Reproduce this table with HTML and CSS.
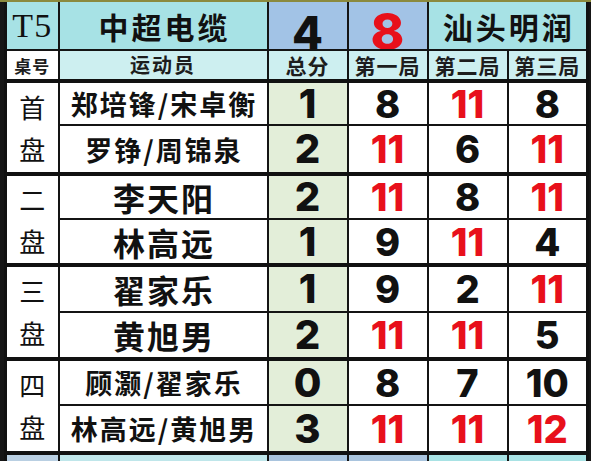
FILE: index.html
```html
<!DOCTYPE html>
<html lang="zh">
<head>
<meta charset="utf-8">
<title>T5 中超电缆 vs 汕头明润</title>
<link rel="stylesheet" href="styles.css">
</head>
<body>
<div class="frame">
<table class="score">
  <colgroup>
    <col class="c-desk"><col class="c-name"><col class="c-total"><col class="c-g"><col class="c-g"><col class="c-g">
  </colgroup>
  <tr class="r-title">
    <td class="t5">T5</td>
    <td class="team">中超电缆</td>
    <td class="big blue"><span class="n4">4</span></td>
    <td class="big blue red"><span class="n8">8</span></td>
    <td class="team" colspan="2">汕头明润</td>
  </tr>
  <tr class="r-head">
    <td class="h desk-h">桌号</td>
    <td class="h h-name">运动员</td>
    <td class="h">总分</td>
    <td class="h">第一局</td>
    <td class="h">第二局</td>
    <td class="h">第三局</td>
  </tr>

  <tr class="r-data r1 gstart">
    <td class="desk" rowspan="2"><div class="desk-v"><span>首</span><span>盘</span></div></td>
    <td class="name">郑培锋/宋卓衡</td>
    <td class="total">1</td>
    <td class="g">8</td><td class="g red">11</td><td class="g">8</td>
  </tr>
  <tr class="r-data r2">
    <td class="name">罗铮/周锦泉</td>
    <td class="total">2</td>
    <td class="g red">11</td><td class="g">6</td><td class="g red">11</td>
  </tr>

  <tr class="r-data r3 gstart">
    <td class="desk" rowspan="2"><div class="desk-v"><span>二</span><span>盘</span></div></td>
    <td class="name single">李天阳</td>
    <td class="total">2</td>
    <td class="g red">11</td><td class="g">8</td><td class="g red">11</td>
  </tr>
  <tr class="r-data r4">
    <td class="name single">林高远</td>
    <td class="total">1</td>
    <td class="g">9</td><td class="g red">11</td><td class="g">4</td>
  </tr>

  <tr class="r-data r5 gstart">
    <td class="desk" rowspan="2"><div class="desk-v"><span>三</span><span>盘</span></div></td>
    <td class="name single">翟家乐</td>
    <td class="total">1</td>
    <td class="g">9</td><td class="g">2</td><td class="g red">11</td>
  </tr>
  <tr class="r-data r6">
    <td class="name single">黄旭男</td>
    <td class="total">2</td>
    <td class="g red">11</td><td class="g red">11</td><td class="g">5</td>
  </tr>

  <tr class="r-data r7 gstart">
    <td class="desk" rowspan="2"><div class="desk-v"><span>四</span><span>盘</span></div></td>
    <td class="name">顾灏/翟家乐</td>
    <td class="total">0</td>
    <td class="g">8</td><td class="g">7</td><td class="g">10</td>
  </tr>
  <tr class="r-data r8">
    <td class="name">林高远/黄旭男</td>
    <td class="total">3</td>
    <td class="g red">11</td><td class="g red">11</td><td class="g red">12</td>
  </tr>

  <tr class="r-next">
    <td class="nx-a"></td><td class="nx-b"></td><td class="nx-c"></td><td class="nx-c"></td><td class="nx-d"></td><td class="nx-d"></td>
  </tr>
</table>
</div>
</body>
</html>
```

FILE: styles.css
```css
html, body {
  margin: 0;
  padding: 0;
  background: #161616;
}

.frame {
  border-top: 2px solid #8b8a3e;
  padding-left: 4px;
  height: 459px;
  overflow: hidden;
}

.score {
  border-collapse: collapse;
  table-layout: fixed;
  width: 585px;
  border-left: 3px solid #111;
  border-right: 3px solid #111;
  font-family: "Noto Sans CJK SC", "Noto Sans", sans-serif;
  color: #111;
}

.c-desk { width: 53px; }
.c-name { width: 209px; }
.c-total { width: 80px; }
.c-g { width: 80px; }

.score td {
  border: 2px solid #141414;
  padding: 0;
  text-align: center;
  vertical-align: middle;
  overflow: hidden;
  background: #fff;
  white-space: nowrap;
  line-height: 1;
}

/* title row */
.r-title td {
  border-top: 0;
  height: 47px;
  background: #a7e2e5;
}
.r-title td.blue { background: #a2c3e6; }
.t5 {
  font-family: "Liberation Serif", "DejaVu Serif", serif;
  font-size: 34px;
  font-weight: 400;
  letter-spacing: 1px;
}
.team {
  font-size: 30px;
  font-weight: 700;
  letter-spacing: 3px;
  padding-left: 3px !important;
}
.big {
  vertical-align: bottom !important;
  font-family: Inter, "Noto Sans", sans-serif;
  font-weight: 800;
}
.n4 {
  display: block;
  font-size: 45px;
  line-height: 44px;
  height: 38px;
}
.n8 {
  display: block;
  font-size: 51px;
  line-height: 46px;
  height: 40px;
}

/* heading row */
.r-head td {
  height: 28px;
  background: #cdeff0;
  font-weight: 700;
  font-size: 21px;
  letter-spacing: 1px;
  color: #1d1d1d;
}
.r-head td.desk-h {
  background: #fff;
  font-size: 17px;
}
.r-head td.h-name {
  font-size: 20px;
  letter-spacing: 2px;
}

/* data rows */
.r-data.r1 td { height: 41px; }
.r-data.r2 td { height: 46px; }
.r-data.r3 td { height: 42px; }
.r-data.r4 td { height: 43px; }
.r-data.r5 td { height: 44px; }
.r-data.r6 td { height: 44px; }
.r-data.r7 td { height: 43px; }
.r-data.r8 td { height: 45px; }
.r-data.gstart td { border-top: 4px solid #111; }

.desk {
  font-size: 26px;
  font-weight: 400;
}
.desk-v {
  display: flex;
  flex-direction: column;
  align-items: center;
  gap: 16px;
  line-height: 26px;
}

.name {
  font-size: 27px;
  font-weight: 700;
  letter-spacing: 2px;
  padding-left: 2px !important;
}
.name.single {
  font-size: 32px;
  letter-spacing: 2px;
}

.total {
  background: #e3eed9 !important;
  font-family: Inter, "Noto Sans", sans-serif;
  font-weight: 800;
  font-size: 40px;
}

.g {
  font-family: Inter, "Noto Sans", sans-serif;
  font-weight: 800;
  font-size: 38px;
}

.red { color: #e8101b; }

/* top of the next table, cut by the frame */
.r-next td {
  height: 10px;
  border-top: 4px solid #111;
}
.r-next td.nx-a { background: #b9cfe2; }
.r-next td.nx-b { background: #bfe6ea; }
.r-next td.nx-c { background: #a9c4de; }
.r-next td.nx-d { background: #a8e2e4; }
```
